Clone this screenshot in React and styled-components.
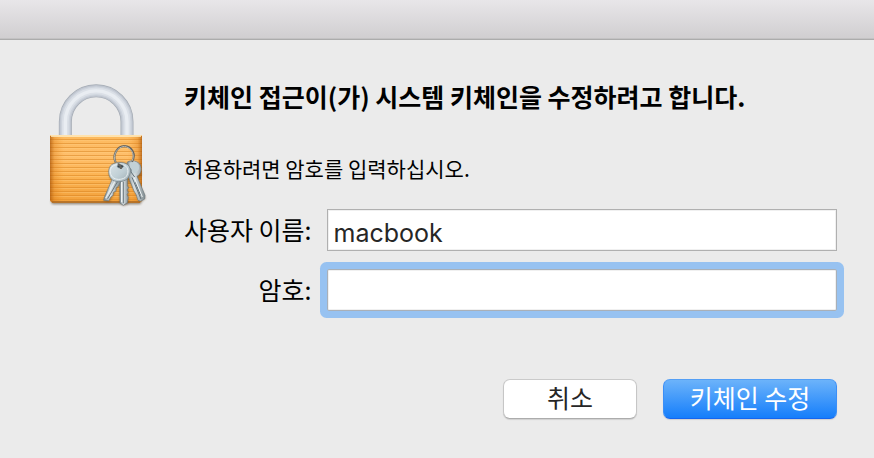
import React from 'react'
import styled, { createGlobalStyle, css } from 'styled-components'

const GlobalStyle = createGlobalStyle`
  * {
    box-sizing: border-box;
  }

  body {
    margin: 0;
    background: #ebebeb;
    color: #000;
    font-family: 'Noto Sans CJK KR', 'Noto Sans', sans-serif;
  }
`

const TitleBar = styled.header`
  height: 40px;
  background: linear-gradient(#e8e6e9, #d0ced0);
  border-bottom: 1px solid #acacac;
  box-shadow: inset 0 -1px #c3c2c3;
`

const Dialog = styled.main`
  display: flex;
  align-items: flex-start;
  padding: 35px 37px 38px 40px;
`

const LockImage = styled.svg`
  flex: none;
  width: 115px;
  height: 140px;
  margin-right: 29px;
`

const Form = styled.form`
  flex: 1;
  min-width: 0;
`

const Title = styled.h1`
  margin: 3px 0 36px;
  font-size: 25px;
  line-height: 36px;
  font-weight: 700;
`

const Message = styled.p`
  margin: 0 0 23px;
  font-size: 21px;
  line-height: 36px;
`

const Fields = styled.div`
  display: grid;
  grid-template-columns: auto 1fr;
  column-gap: 15px;
  row-gap: 18px;
`

const Label = styled.label`
  font-size: 25px;
  line-height: 40px;
  text-align: right;
`

const Input = styled.input`
  width: 100%;
  min-width: 0;
  height: 42px;
  padding: 5px 6px 0;
  border: 1px solid #b0b0b0;
  border-radius: 0;
  background: #fff;
  box-shadow: inset 0 0 0 1px #f0f0f0;
  color: #262626;
  font-family: Inter, 'Noto Sans CJK KR', sans-serif;
  font-size: 25px;
  outline: none;

  ${props =>
    props.$active &&
    css`
      border-color: #a9b0b8;
      box-shadow: inset 0 0 0 1px #f0f0f0, 0 0 0 7px #97c2f1;
      border-radius: 2px;
    `}
`

const Actions = styled.div`
  display: flex;
  justify-content: flex-end;
  gap: 26px;
  margin-top: 68px;
`

const Button = styled.button`
  width: ${props => (props.$primary ? '174px' : '134px')};
  height: 40px;
  padding: 0 0 4px;
  border: 1px solid;
  border-color: ${props =>
    props.$primary ? '#549ff5 #3c8ff7 #1565ef' : '#cacaca #c6c6c6 #acacac'};
  border-radius: 7px;
  background: ${props =>
    props.$primary ? 'linear-gradient(#6cb3fa, #157efb)' : '#fff'};
  box-shadow: 0 1px 1px rgba(0, 0, 0, 0.12);
  color: ${props => (props.$primary ? '#fff' : '#262626')};
  font-family: inherit;
  font-size: 25px;
  line-height: 34px;
`

const KeychainLock = () => (
  <LockImage viewBox="0 0 345 420" aria-hidden="true">
    <defs>
      <linearGradient id="body" x1="0" y1="0" x2="0" y2="1">
        <stop offset="0" stopColor="#fdb95c" />
        <stop offset="0.3" stopColor="#ffbf6b" />
        <stop offset="0.6" stopColor="#fcb453" />
        <stop offset="1" stopColor="#f2a03a" />
      </linearGradient>
      <linearGradient id="edges" x1="0" y1="0" x2="1" y2="0">
        <stop offset="0" stopColor="#a95509" stopOpacity="0.75" />
        <stop offset="0.05" stopColor="#d97a16" stopOpacity="0.35" />
        <stop offset="0.16" stopColor="#f79a2d" stopOpacity="0" />
        <stop offset="0.84" stopColor="#f79a2d" stopOpacity="0" />
        <stop offset="0.95" stopColor="#d97a16" stopOpacity="0.35" />
        <stop offset="1" stopColor="#a95509" stopOpacity="0.75" />
      </linearGradient>
      <pattern id="lines" width="12" height="12" y="192" patternUnits="userSpaceOnUse">
        <rect width="12" height="3" fill="#d6811f" opacity="0.5" />
        <rect y="3" width="12" height="3" fill="#ffd08a" opacity="0.35" />
      </pattern>
      <linearGradient id="metal" x1="0" y1="0" x2="1" y2="0">
        <stop offset="0" stopColor="#7d898e" />
        <stop offset="0.4" stopColor="#d8e0e3" />
        <stop offset="1" stopColor="#828d91" />
      </linearGradient>
      <linearGradient id="head" x1="0" y1="0" x2="1" y2="1">
        <stop offset="0" stopColor="#dbe4e8" />
        <stop offset="0.55" stopColor="#c0cfd5" />
        <stop offset="1" stopColor="#9eacb3" />
      </linearGradient>
      <filter id="soft" x="-20%" y="-20%" width="140%" height="140%">
        <feGaussianBlur stdDeviation="3" />
      </filter>
    </defs>

    <g fill="none">
      <path d="M76 184V140A92 92 0 0 1 261 140V184" stroke="#a4abb4" strokeWidth="39" />
      <path d="M76 184V140A92 92 0 0 1 261 140V184" stroke="#bfc5cf" strokeWidth="35" />
      <path d="M76 184V140A92 92 0 0 1 261 140V184" stroke="#cdd3dc" strokeWidth="28" />
      <path d="M76 184V140A92 92 0 0 1 261 140V184" stroke="#dbe0e7" strokeWidth="20" />
      <path d="M76 184V140A92 92 0 0 1 261 140V184" stroke="#e9edf2" strokeWidth="10" />
    </g>

    <rect x="34" y="373" width="270" height="15" rx="6" fill="#54422f" opacity="0.6" filter="url(#soft)" />
    <path d="M30 183Q30 180 35 180H301Q306 180 306 183V374Q304 383 296 383H40Q32 383 30 374Z" fill="url(#body)" />
    <path d="M30 190H306V374H30Z" fill="url(#lines)" />
    <path d="M30 183H306V374Q304 383 296 383H40Q32 383 30 374Z" fill="url(#edges)" />
    <path d="M33 183H303" stroke="#fff0c9" strokeWidth="5" />
    <path d="M36 381H300" stroke="#a96722" strokeWidth="4" />

    <g fill="#553719" opacity="0.45" filter="url(#soft)">
      <circle cx="242" cy="296" r="34" />
      <path d="M272 262L300 270 304 300 294 314 317 370 305 380 266 318Z" />
      <path d="M221 311L241 322 208 381 192 378Z" />
      <path d="M239 318H265V387L250 393 239 383Z" />
    </g>

    <g stroke="#6b787e" strokeWidth="2">
      <path d="M262 261C276 254 294 258 301 270C307 284 302 298 291 304L315 361 314 372 302 379 294 376 289 360 282 348 270 318 260 292Z" fill="url(#metal)" />
      <path d="M268 263Q289 257 296 271Q302 290 281 296L271 286Z" fill="#c2d1d6" stroke="none" />
      <path d="M266 278Q277 282 273 291L284 306M276 307L303 372M286 322L302 361" fill="none" stroke="#627179" strokeWidth="3" />
      <path d="M283 308L307 366" fill="none" stroke="#eff4f5" strokeWidth="3" />

      <path d="M239 306H262V332L266 338 261 345 265 352 261 359 265 367 262 383 250 391 240 384Z" fill="url(#metal)" />
      <path d="M250 320V385" stroke="#6a767c" strokeWidth="3" />
      <path d="M245 320V382" stroke="#edf2f3" strokeWidth="4" />

      <path d="M218 310L242 320 235 334 228 339 228 348 220 352 219 361 213 365 206 377 191 376 193 367Z" fill="url(#metal)" />
      <path d="M232 321L203 371" stroke="#6a767c" strokeWidth="3" />
      <path d="M226 317L197 370" stroke="#e6edef" strokeWidth="4" />
      <path d="M211 273C221 260 251 259 263 269C276 280 272 302 260 313C248 322 225 323 214 312C204 301 204 284 211 273Z" fill="url(#head)" />
      <path d="M215 276C226 266 247 266 258 274C267 283 265 300 255 308C244 315 227 315 218 307C208 297 210 283 215 276Z" fill="none" stroke="#e8eff1" strokeWidth="3" />
      <ellipse cx="241" cy="274" rx="9" ry="5" fill="#374349" stroke="#67777e" />
    </g>
    <path d="M227 262C216 239 232 214 253 213C275 214 290 238 276 260M233 267Q242 268 243 282" fill="none" stroke="#66645e" strokeWidth="6" />
    <path d="M226 260C217 239 232 216 253 214C272 216 287 238 276 258" fill="none" stroke="#b4b7b2" strokeWidth="3" />
  </LockImage>
)

const App = () => (
  <>
    <GlobalStyle />
    <TitleBar />
    <Dialog>
      <KeychainLock />
      <Form onSubmit={e => e.preventDefault()}>
        <Title>키체인 접근이(가) 시스템 키체인을 수정하려고 합니다.</Title>
        <Message>허용하려면 암호를 입력하십시오.</Message>
        <Fields>
          <Label htmlFor="username">사용자 이름:</Label>
          <Input id="username" type="text" defaultValue="macbook" spellCheck={false} />
          <Label htmlFor="password">암호:</Label>
          <Input id="password" type="password" $active />
        </Fields>
        <Actions>
          <Button type="button">취소</Button>
          <Button type="submit" $primary>
            키체인 수정
          </Button>
        </Actions>
      </Form>
    </Dialog>
  </>
)

export default App
